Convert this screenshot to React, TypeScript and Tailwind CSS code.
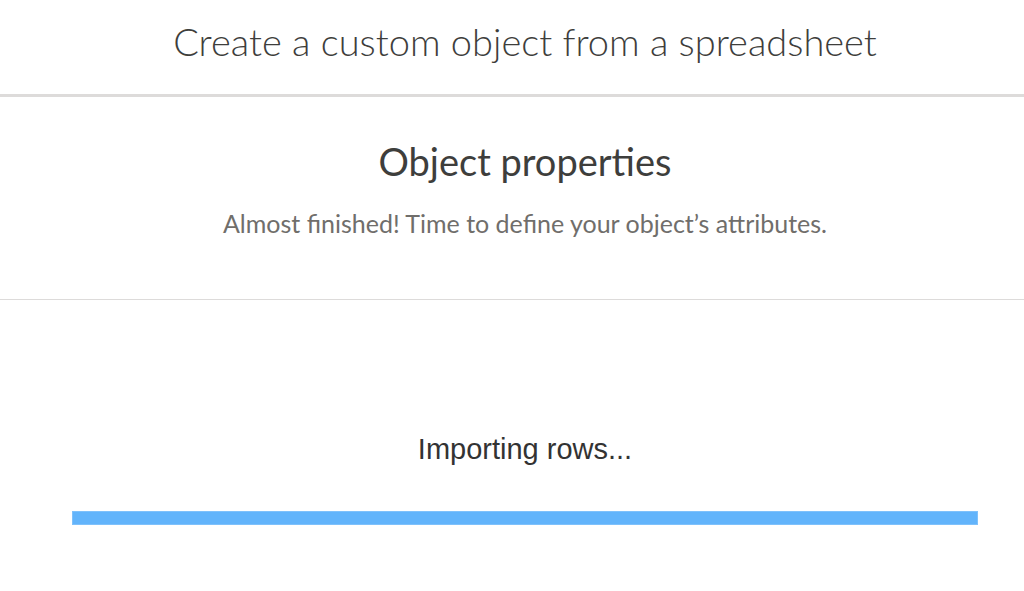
export default function App() {
  return (
    <div className="min-h-[591px] w-full overflow-hidden bg-white" style={{ fontFamily: 'Lato, "Open Sans", sans-serif' }}>
      <header className="flex h-[97px] items-center justify-center border-b-[3px] border-[#dddbda] pb-[12px] pl-[26px]">
        <h1 className="text-[38px] font-light leading-[48px] text-[#3e3e3c]">
          Create a custom object from a spreadsheet
        </h1>
      </header>

      <section className="flex h-[203px] flex-col items-center border-b border-[#dddbda] pl-[26px] pt-[40px]">
        <h2 className="text-[38px] leading-[48px] text-[#3e3e3c]">Object properties</h2>
        <p className="mt-[23px] text-[25px] leading-[30px] text-[#706e6b]">
          Almost finished! Time to define your object’s attributes.
        </p>
      </section>

      <div className="flex flex-col items-center pl-[26px] pt-[131px]">
        <p className="text-[29px] leading-[36px] text-[#333333]" style={{ fontFamily: '"Liberation Sans", Arial, sans-serif' }}>
          Importing rows...
        </p>
        <div className="mt-[44px] h-[14px] w-[906px] border border-[#7fc1fb] bg-[#62b4fb]" />
      </div>
    </div>
  );
}
